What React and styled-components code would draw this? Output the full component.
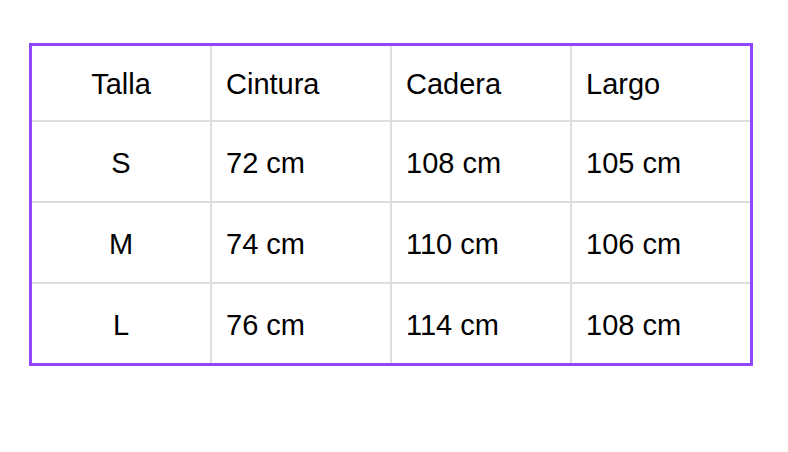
import React from "react";
import styled, { createGlobalStyle } from "styled-components";

const Global = createGlobalStyle`
  html, body { margin: 0; padding: 0; background: #ffffff; }
  body { font-family: "Liberation Sans", Arial, sans-serif; }
`;

const Page = styled.div`
  width: 788px;
  height: 452px;
  padding: 43px 0 0 29px;
  box-sizing: border-box;
`;

const Table = styled.div`
  display: grid;
  grid-template-columns: repeat(4, 178px);
  grid-template-rows: 74px 79px 79px 79px;
  gap: 2px;
  width: max-content;
  background: #dddddd;
  border: 3px solid #9147ff;
`;

const Cell = styled.div`
  background: #ffffff;
  display: flex;
  align-items: center;
  justify-content: ${(p) => (p.$center ? "center" : "flex-start")};
  padding: 2px ${(p) => (p.$center ? "0" : "14px")} 0;
  font-size: 29px;
  line-height: 32px;
  color: #000000;
`;

const headers = ["Talla", "Cintura", "Cadera", "Largo"];
const rows = [
  ["S", "72 cm", "108 cm", "105 cm"],
  ["M", "74 cm", "110 cm", "106 cm"],
  ["L", "76 cm", "114 cm", "108 cm"],
];

export default function App() {
  return (
    <>
      <Global />
      <Page>
        <Table>
          {headers.map((h, i) => (
            <Cell key={h} $center={i === 0}>
              {h}
            </Cell>
          ))}
          {rows.map((r) =>
            r.map((c, i) => (
              <Cell key={r[0] + i} $center={i === 0}>
                {c}
              </Cell>
            ))
          )}
        </Table>
      </Page>
    </>
  );
}
